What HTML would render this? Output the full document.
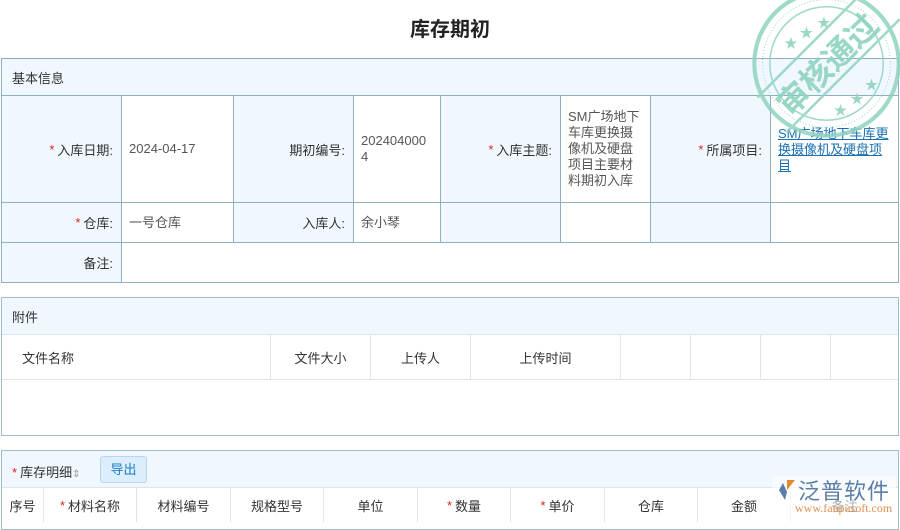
<!DOCTYPE html>
<html><head><meta charset="utf-8"><style>
*{margin:0;padding:0;box-sizing:border-box}
body{width:900px;height:522px;overflow:hidden;background:#fff;font-family:"Liberation Sans","Noto Sans CJK SC",sans-serif;font-size:13px;color:#333;position:relative}
.a{position:absolute}
.box{position:absolute;border:1px solid #8fb0c4;}
.lab{position:absolute;background:#f0f7fe;border-right:1px solid #8fb0c4;border-bottom:1px solid #8fb0c4;text-align:right;padding-right:8px;display:flex;align-items:center;justify-content:flex-end}
.val{position:absolute;border-right:1px solid #8fb0c4;border-bottom:1px solid #8fb0c4;padding:0 7px;display:flex;align-items:center;color:#555;line-height:16px}
.r{color:#e02020;margin-right:3px}
.th{position:absolute;top:0;height:100%;border-right:1px solid #e3e3e3;display:flex;align-items:center;justify-content:center}
</style></head><body>
<div class="a" style="left:0;top:13px;width:900px;text-align:center;font-size:20px;font-weight:bold;color:#222">库存期初</div>

<div class="box" style="left:1px;top:58px;width:898px;height:225px;">
<div class="a" style="left:0;top:0;width:896px;height:37px;background:#f0f7fe;border-bottom:1px solid #8fb0c4;padding:9px 10px">基本信息</div>
<div class="lab" style="left:0;top:37px;width:120px;height:107px"><span class="r">*</span>入库日期:</div>
<div class="val" style="left:120px;top:37px;width:112px;height:107px">2024-04-17</div>
<div class="lab" style="left:232px;top:37px;width:120px;height:107px">期初编号:</div>
<div class="val" style="left:352px;top:37px;width:87px;height:107px;word-break:break-all">2024040004</div>
<div class="lab" style="left:439px;top:37px;width:120px;height:107px"><span class="r">*</span>入库主题:</div>
<div class="val" style="left:559px;top:37px;width:90px;height:107px">SM广场地下车库更换摄像机及硬盘项目主要材料期初入库</div>
<div class="lab" style="left:649px;top:37px;width:120px;height:107px"><span class="r">*</span>所属项目:</div>
<div class="val" style="left:769px;top:37px;width:127px;height:107px;align-items:flex-start;padding-top:30px;color:#1a6fb0;text-decoration:underline;border-right:none">SM广场地下车库更换摄像机及硬盘项目</div>
<div class="lab" style="left:0;top:144px;width:120px;height:40px"><span class="r">*</span>仓库:</div>
<div class="val" style="left:120px;top:144px;width:112px;height:40px">一号仓库</div>
<div class="lab" style="left:232px;top:144px;width:120px;height:40px">入库人:</div>
<div class="val" style="left:352px;top:144px;width:87px;height:40px">余小琴</div>
<div class="lab" style="left:439px;top:144px;width:120px;height:40px"></div>
<div class="val" style="left:559px;top:144px;width:90px;height:40px"></div>
<div class="lab" style="left:649px;top:144px;width:120px;height:40px"></div>
<div class="val" style="left:769px;top:144px;width:127px;height:40px;border-right:none"></div>
<div class="lab" style="left:0;top:184px;width:120px;height:39px;border-bottom:none">备注:</div>
</div>

<div class="box" style="left:1px;top:297px;width:898px;height:139px;border-color:#9dbfcc">
<div class="a" style="left:0;top:0;width:896px;height:37px;background:#f0f7fe;border-bottom:1px solid #dde6ee;padding:9px 10px">附件</div>
<div class="a" style="left:0;top:37px;width:896px;height:45px;border-bottom:1px solid #e3e3e3">
<div class="th" style="left:0;width:269px;justify-content:flex-start;padding-left:20px">文件名称</div>
<div class="th" style="left:269px;width:100px">文件大小</div>
<div class="th" style="left:369px;width:100px">上传人</div>
<div class="th" style="left:469px;width:150px">上传时间</div>
<div class="th" style="left:619px;width:70px"></div>
<div class="th" style="left:689px;width:70px"></div>
<div class="th" style="left:759px;width:70px"></div>
</div>
</div>

<div class="box" style="left:1px;top:450px;width:898px;height:80px;border-color:#9dbfcc">
<div class="a" style="left:0;top:0;width:896px;height:37px;background:#f0f7fe;border-bottom:1px solid #dde6ee"></div>
<div class="a" style="left:10px;top:11px"><span class="r">*</span>库存明细<span style="color:#999;font-size:10px">⇕</span></div>
<div class="a" style="left:98px;top:5px;width:47px;height:27px;background:#dcedfb;border:1px solid #b8d6ee;border-radius:3px;color:#1a7cc8;text-align:center;line-height:25px">导出</div>
<div class="a" style="left:0;top:37px;width:896px;height:34px;font-size:13px">
<div class="th" style="left:0;width:42px">序号</div>
<div class="th" style="left:42px;width:93px"><span class="r">*</span>材料名称</div>
<div class="th" style="left:135px;width:94px">材料编号</div>
<div class="th" style="left:229px;width:93px">规格型号</div>
<div class="th" style="left:322px;width:94px">单位</div>
<div class="th" style="left:416px;width:93px"><span class="r">*</span>数量</div>
<div class="th" style="left:509px;width:94px"><span class="r">*</span>单价</div>
<div class="th" style="left:603px;width:93px">仓库</div>
<div class="th" style="left:696px;width:93px">金额</div>
<div class="th" style="left:789px;width:107px;border:none">备注</div>
</div>
</div>

<!-- stamp -->
<svg class="a" style="left:743px;top:-14px" width="165" height="155" viewBox="0 0 160 150">
<g fill="none" stroke="#8fd3c0" opacity="0.85">
<circle cx="81" cy="75" r="70" stroke-width="4"/>
<circle cx="81" cy="75" r="55" stroke-width="1.5"/>
<circle cx="81" cy="75" r="62" stroke-width="1" stroke-dasharray="1 2"/>
<line x1="14" y1="108" x2="122" y2="0" stroke-width="2.5"/>
<line x1="42" y1="142" x2="152" y2="32" stroke-width="2.5"/>
</g>
<g fill="#8fd3c0" font-size="13" opacity="0.9"><text x="40" y="60">★</text><text x="55" y="50">★</text><text x="72" y="40">★</text><text x="88" y="125">★</text><text x="104" y="114">★</text><text x="118" y="100">★</text></g>
<text x="0" y="0" transform="translate(84,78) rotate(-45)" text-anchor="middle" dominant-baseline="middle" font-family="Liberation Sans,Noto Sans CJK SC,sans-serif" font-size="31" font-weight="bold" fill="#8fd3c0" opacity="0.9">审核通过</text>
</svg>

<!-- logo -->
<div class="a" style="left:772px;top:476px;width:124px;height:46px;background:rgba(255,255,255,0.6)"></div>
<svg class="a" style="left:775px;top:478px" width="24" height="24" viewBox="0 0 24 24"><path d="M12 2 L20 2 L12 12 Z" fill="#e58a2a"/><path d="M8 5 L4 12 L10 22 L12 14 Z" fill="#5a7ea8"/></svg>
<div class="a" style="left:798px;top:474px;font-size:22px;color:#5a7ea8;letter-spacing:1px">泛普软件</div>
<div class="a" style="left:795px;top:501px;font-size:12px;color:#e09050;font-family:'Liberation Serif',serif">www.fanpusoft.com</div>
</body></html>
